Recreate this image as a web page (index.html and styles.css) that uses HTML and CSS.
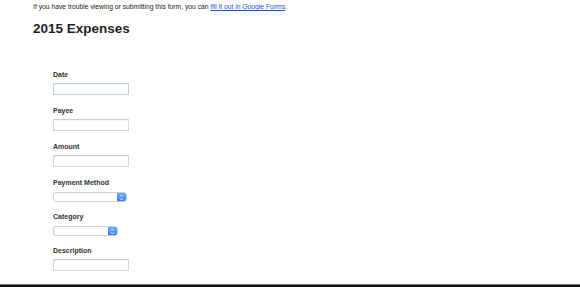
FILE: index.html
```html
<!DOCTYPE html>
<html>
<head>
<meta charset="utf-8">
<link rel="stylesheet" href="styles.css">
</head>
<body>
<div class="page">
  <p class="intro">If you have trouble viewing or submitting this form, you can <a href="#">fill it out in Google Forms</a>.</p>
  <h1 class="title">2015 Expenses</h1>
  <form class="form">
    <div class="field">
      <label class="label">Date</label>
      <div class="input focused"></div>
    </div>
    <div class="field">
      <label class="label">Payee</label>
      <div class="input"></div>
    </div>
    <div class="field">
      <label class="label">Amount</label>
      <div class="input"></div>
    </div>
    <div class="field field-select">
      <label class="label">Payment Method</label>
      <div class="select wide"><span class="select-btn"><svg width="5" height="7" viewBox="0 0 5 7"><path d="M0.8 2.8 L2.5 1 L4.2 2.8 M0.8 4.2 L2.5 6 L4.2 4.2" fill="none" stroke="#fff" stroke-width="0.9"/></svg></span></div>
    </div>
    <div class="field field-select">
      <label class="label">Category</label>
      <div class="select narrow"><span class="select-btn"><svg width="5" height="7" viewBox="0 0 5 7"><path d="M0.8 2.8 L2.5 1 L4.2 2.8 M0.8 4.2 L2.5 6 L4.2 4.2" fill="none" stroke="#fff" stroke-width="0.9"/></svg></span></div>
    </div>
    <div class="field">
      <label class="label">Description</label>
      <div class="input"></div>
    </div>
  </form>
</div>
<div class="bottom-bar"></div>
</body>
</html>
```
FILE: styles.css
```css
html, body {
  margin: 0;
  padding: 0;
  background: #fff;
}
body {
  font-family: "Liberation Sans", Arial, sans-serif;
  color: #222;
}
.page {
  padding: 3px 0 0 33px;
}
.intro {
  margin: 0;
  font-size: 6.75px;
  line-height: 8px;
  color: #222;
}
.intro a {
  color: #1a55cc;
  text-decoration: underline;
}
.title {
  margin: 10px 0 0 0;
  font-size: 13.5px;
  line-height: 16px;
  font-weight: bold;
  color: #1f1f1f;
}
.form {
  display: flex;
  flex-direction: column;
  margin-left: 20px;
  padding-top: 34px;
}
.field {
  display: flex;
  flex-direction: column;
  align-items: flex-start;
  margin-bottom: 12px;
}
.field-select {
  margin-bottom: 11px;
}
.label {
  font-size: 7px;
  line-height: 8px;
  font-weight: bold;
  color: #333;
  margin-bottom: 4px;
}
.input {
  box-sizing: border-box;
  width: 76px;
  height: 12px;
  border: 1px solid #d8d8d8;
  border-top-color: #cfcfcf;
  background: #fff;
  box-shadow: inset 0 1px 1px rgba(0,0,0,0.04);
}
.input.focused {
  border-color: #b9d3f1;
}
.select {
  box-sizing: border-box;
  height: 10px;
  border: 1px solid #cfcfcf;
  border-radius: 3px;
  background: #fff;
  display: flex;
  justify-content: flex-end;
  overflow: hidden;
  margin-top: 1px;
}
.select.wide {
  width: 74px;
}
.select.narrow {
  width: 65px;
}
.select-btn {
  width: 9px;
  height: 100%;
  background: linear-gradient(#6aaefb, #2a7cf4);
  display: flex;
  align-items: center;
  justify-content: center;
}
.bottom-bar {
  position: fixed;
  left: 0;
  right: 0;
  bottom: 0;
  height: 2px;
  background: #111;
  border-top: 1px solid #777;
}
```
